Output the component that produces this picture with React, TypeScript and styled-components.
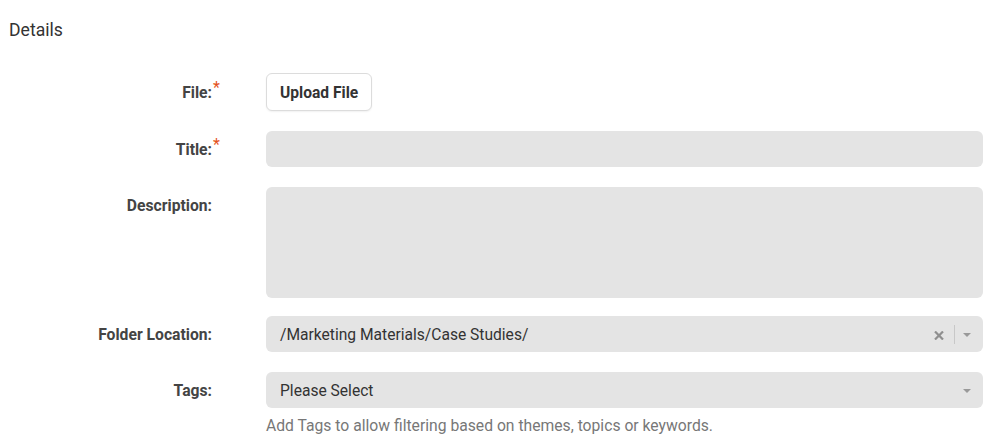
import styled, { createGlobalStyle } from 'styled-components';

const GlobalStyle = createGlobalStyle`
  body {
    margin: 0;
    background: #fff;
    font-family: Roboto, 'Liberation Sans', sans-serif;
    color: #333;
  }
`;

function App() {
  return (
    <Wrapper>
      <GlobalStyle />
      <Heading>Details</Heading>
      <Form>
        <Label $required>File:</Label>
        <UploadButton type='button'>Upload File</UploadButton>

        <Label $required>Title:</Label>
        <Input />

        <Label $top>Description:</Label>
        <TextArea />

        <Label>Folder Location:</Label>
        <Select>
          <span>/Marketing Materials/Case Studies/</span>
          <SelectControls>
            <ClearIcon width='10' height='9' viewBox='0 0 10 9'>
              <path d='M1 0.5 L9 8.5 M9 0.5 L1 8.5' stroke='#8f8f8f' strokeWidth='2.2' />
            </ClearIcon>
            <Divider />
            <Caret />
          </SelectControls>
        </Select>

        <Label $top>Tags:</Label>
        <Field>
          <Select>
            <span>Please Select</span>
            <SelectControls>
              <Caret />
            </SelectControls>
          </Select>
          <Help>Add Tags to allow filtering based on themes, topics or keywords.</Help>
        </Field>
      </Form>
    </Wrapper>
  );
}

export default App;

const Wrapper = styled.div`
  width: 1001px;
  padding: 19px 18px 0 0;
  box-sizing: border-box;
`;

const Heading = styled.h2`
  margin: 0 0 0 9px;
  font-size: 17.6px;
  line-height: 22px;
  font-weight: 400;
  color: #333;
`;

const Form = styled.div`
  display: grid;
  grid-template-columns: 212px 1fr;
  column-gap: 54px;
  row-gap: 20px;
  margin-top: 32px;
  align-items: center;
`;

const Label = styled.label<{ $required?: boolean; $top?: boolean }>`
  position: relative;
  justify-self: end;
  align-self: ${({ $top }) => ($top ? 'start' : 'center')};
  padding-top: ${({ $top }) => ($top ? '9px' : '1px')};
  font-size: 15.7px;
  line-height: 20px;
  font-weight: 700;
  color: #444;

  &::after {
    content: ${({ $required }) => ($required ? "'*'" : 'none')};
    position: absolute;
    left: 100%;
    top: -4px;
    margin-left: 1px;
    color: #e4521b;
    font-size: 16px;
    font-weight: 400;
  }
`;

const UploadButton = styled.button`
  justify-self: start;
  height: 38px;
  padding: 1px 13px 0;
  background: #fff;
  border: 1px solid #dcdcdc;
  border-radius: 6px;
  box-shadow: 0 1px 2px rgba(0, 0, 0, 0.06);
  font-family: Roboto, 'Liberation Sans', sans-serif;
  font-size: 15.6px;
  font-weight: 700;
  color: #333;
`;

const Input = styled.div`
  height: 36px;
  background: #e4e4e4;
  border-radius: 6px;
`;

const TextArea = styled.div`
  height: 111px;
  background: #e4e4e4;
  border-radius: 6px;
  margin-bottom: -2px;
`;

const Field = styled.div`
  display: flex;
  flex-direction: column;
`;

const Select = styled.div`
  height: 36px;
  display: flex;
  align-items: center;
  justify-content: space-between;
  padding: 1px 0 0 14px;
  box-sizing: border-box;
  background: #e4e4e4;
  border-radius: 6px;
  font-size: 15.6px;
  color: #333;
`;

const SelectControls = styled.div`
  display: flex;
  align-items: center;
  height: 100%;
  padding-right: 12px;
`;

const ClearIcon = styled.svg`
  display: block;
  margin: 2px 10px 0 0;
`;

const Divider = styled.span`
  width: 1px;
  height: 19px;
  background: #c8c8c8;
  margin-right: 8px;
`;

const Caret = styled.span`
  width: 0;
  height: 0;
  border-left: 4px solid transparent;
  border-right: 4px solid transparent;
  border-top: 4px solid #999;
`;

const Help = styled.p`
  margin: 9px 0 0;
  font-size: 15.7px;
  line-height: 18px;
  color: #777;
`;
